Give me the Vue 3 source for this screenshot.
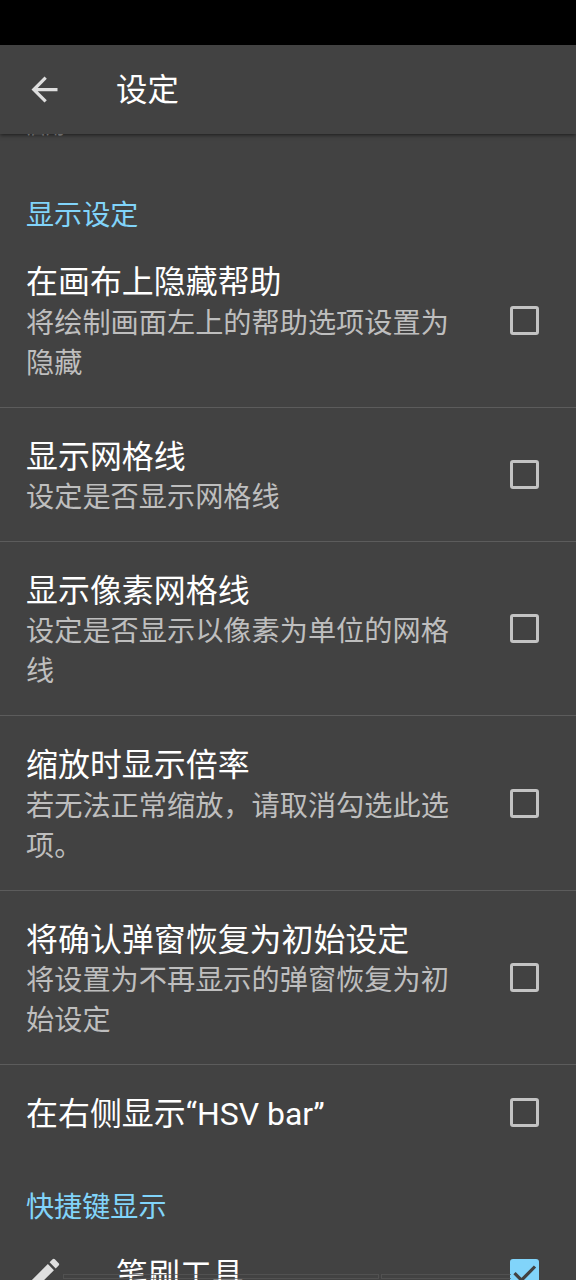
<script setup>
const rows = [
  { title: '在画布上隐藏帮助', lines: ['将绘制画面左上的帮助选项设置为', '隐藏'] },
  { title: '显示网格线', lines: ['设定是否显示网格线'] },
  { title: '显示像素网格线', lines: ['设定是否显示以像素为单位的网格', '线'] },
  { title: '缩放时显示倍率', lines: ['若无法正常缩放，请取消勾选此选', '项。'] },
  { title: '将确认弹窗恢复为初始设定', lines: ['将设置为不再显示的弹窗恢复为初', '始设定'] },
  { title: '在右侧显示“HSV bar”', lines: [] },
]
</script>

<template>
  <div class="screen">
    <div class="status"></div>
    <header class="bar">
      <svg class="back" viewBox="0 0 24 24"><path d="M20 11H7.83l5.59-5.59L12 4l-8 8 8 8 1.41-1.41L7.83 13H20z" /></svg>
      <h1>设定</h1>
    </header>
    <main>
      <div class="previous"><span>启用</span></div>
      <h2 class="first">显示设定</h2>
      <section v-for="(row, i) in rows" :key="i" class="row" :class="{ single: !row.lines.length }">
        <div class="text">
          <div class="title">{{ row.title }}</div>
          <div v-for="l in row.lines" :key="l" class="summary">{{ l }}</div>
        </div>
        <span class="box"></span>
      </section>
      <h2 class="second">快捷键显示</h2>
      <section class="row tool">
        <svg class="pencil" viewBox="0 0 24 24"><path d="M3 17.25V21h3.75L17.81 9.94l-3.75-3.75zM20.71 7.04a1 1 0 0 0 0-1.41l-2.34-2.34a1 1 0 0 0-1.41 0l-1.83 1.83 3.75 3.75z" /></svg>
        <div class="title">笔刷工具</div>
        <svg class="checked" viewBox="0 0 29 29"><rect width="29" height="29" rx="3" /><path d="M4.5 14.2l7 7L25 7.5" /></svg>
      </section>
    </main>
    <div class="edge"><i></i><i></i></div>
  </div>
</template>

<style>
body { background: #424242; overflow: hidden; }
</style>

<style scoped>
.screen { position: relative; width: 576px; height: 1280px; overflow: hidden; background: #424242; color: #fff; font-family: Roboto, "Noto Sans CJK SC", sans-serif; display: flex; flex-direction: column; }
.status { height: 45px; flex: none; background: #000; }
.bar { position: relative; z-index: 1; height: 89px; flex: none; display: flex; align-items: center; background: #424242; box-shadow: 0 1px 4px rgba(0, 0, 0, .6); }
.back { width: 39px; height: 39px; margin-left: 25px; fill: #dedede; }
h1 { margin: 0 0 0 52px; padding-top: 2px; font-size: 31.4px; font-weight: 400; line-height: 40px; }
main { flex: none; }
.previous { height: 2px; margin-bottom: 1px; overflow: hidden; display: flex; align-items: flex-end; padding-left: 27px; color: #a8a8a8; font-size: 19px; line-height: 24px; }
.previous span { margin-bottom: -4px; }
h2 { margin: 0; padding-left: 26px; font-size: 28.1px; font-weight: 400; line-height: 40px; color: #81d4fa; }
.first { padding-top: 59px; height: 37.2px; }
.row { box-sizing: border-box; display: flex; align-items: center; justify-content: space-between; padding: 27px 37px 26px 26px; border-bottom: 1.5px solid #5c5c5c; }
.row.single { height: 95px; padding-top: 0; padding-bottom: 0; border: 0; }
.text { padding-top: 2px; margin-bottom: -3.4px; }
.title { font-size: 31.95px; line-height: 41.4px; height: 41.4px; white-space: nowrap; }
.summary { font-size: 28.2px; line-height: 40.2px; height: 40.2px; color: #bebebe; white-space: nowrap; }
.single .text { margin-bottom: -2px; }
.box { box-sizing: border-box; width: 29px; height: 29px; flex: none; border: 3px solid #c3c3c3; border-radius: 3px; }
.second { padding-top: 28px; margin-bottom: -1.5px; }
.row.tool { justify-content: flex-start; height: 95px; padding-top: 0; padding-bottom: 0; border: 0; }
.pencil { width: 39px; height: 39px; margin-left: -1px; fill: #dedede; }
.tool .title { margin-left: 52px; padding-top: 3px; flex: 1; }
.checked { width: 29px; height: 29px; fill: #81d4fa; }
.checked path { fill: none; stroke: #424242; stroke-width: 3.2; }
.edge { position: absolute; left: 63px; top: 1274px; display: flex; gap: 2px; }
.edge i { box-sizing: border-box; height: 5px; border: 1px solid rgba(88, 88, 88, .7); }
.edge i:first-child { width: 316px; }
.edge i:last-child { width: 130px; border-right: 0; }
</style>
